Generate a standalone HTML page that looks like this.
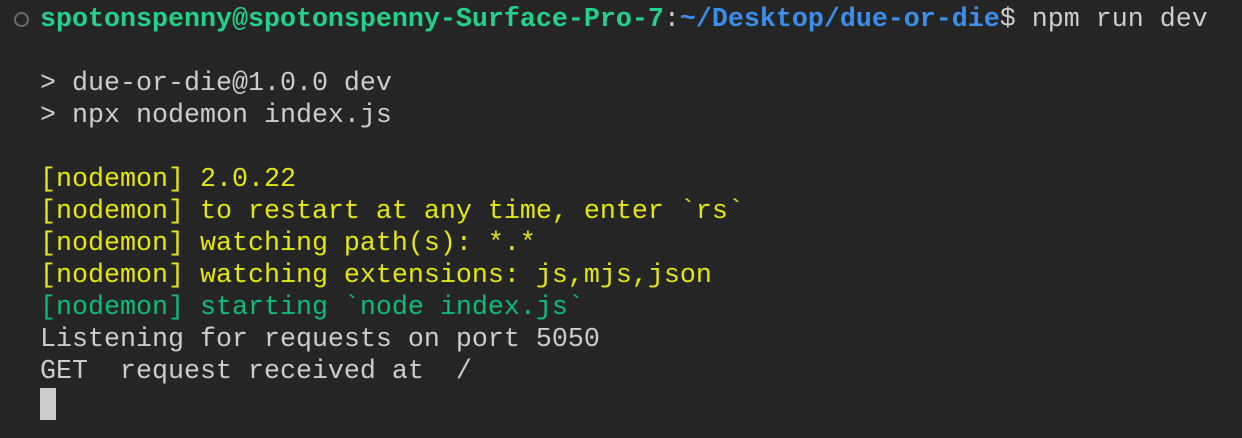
<!DOCTYPE html>
<html><head><style>
html,body{margin:0;padding:0;background:#252526;width:1242px;height:438px;overflow:hidden}
.t{position:absolute;left:40px;top:4px;font-family:"Liberation Mono",monospace;font-size:26.67px;line-height:32px;color:#cccccc;white-space:pre}
.g{color:#23d18b;font-weight:bold}.b{color:#3b8eea;font-weight:bold}.y{color:#e5e510}.n{color:#0dbc79}
.c{position:absolute;left:14px;top:12px;width:11px;height:11px;border:2px solid #6b6b6b;border-radius:50%}
.cur{position:absolute;left:40px;top:388px;width:16px;height:32px;background:#cccccc}
</style></head><body>
<div class="c"></div>
<div class="t"><span class="g">spotonspenny@spotonspenny-Surface-Pro-7</span>:<span class="b">~/Desktop/due-or-die</span>$ npm run dev

&gt; due-or-die@1.0.0 dev
&gt; npx nodemon index.js

<span class="y">[nodemon] 2.0.22</span>
<span class="y">[nodemon] to restart at any time, enter `rs`</span>
<span class="y">[nodemon] watching path(s): *.*</span>
<span class="y">[nodemon] watching extensions: js,mjs,json</span>
<span class="n">[nodemon] starting `node index.js`</span>
Listening for requests on port 5050
GET  request received at  /
</div>
<div class="cur"></div>
</body></html>
